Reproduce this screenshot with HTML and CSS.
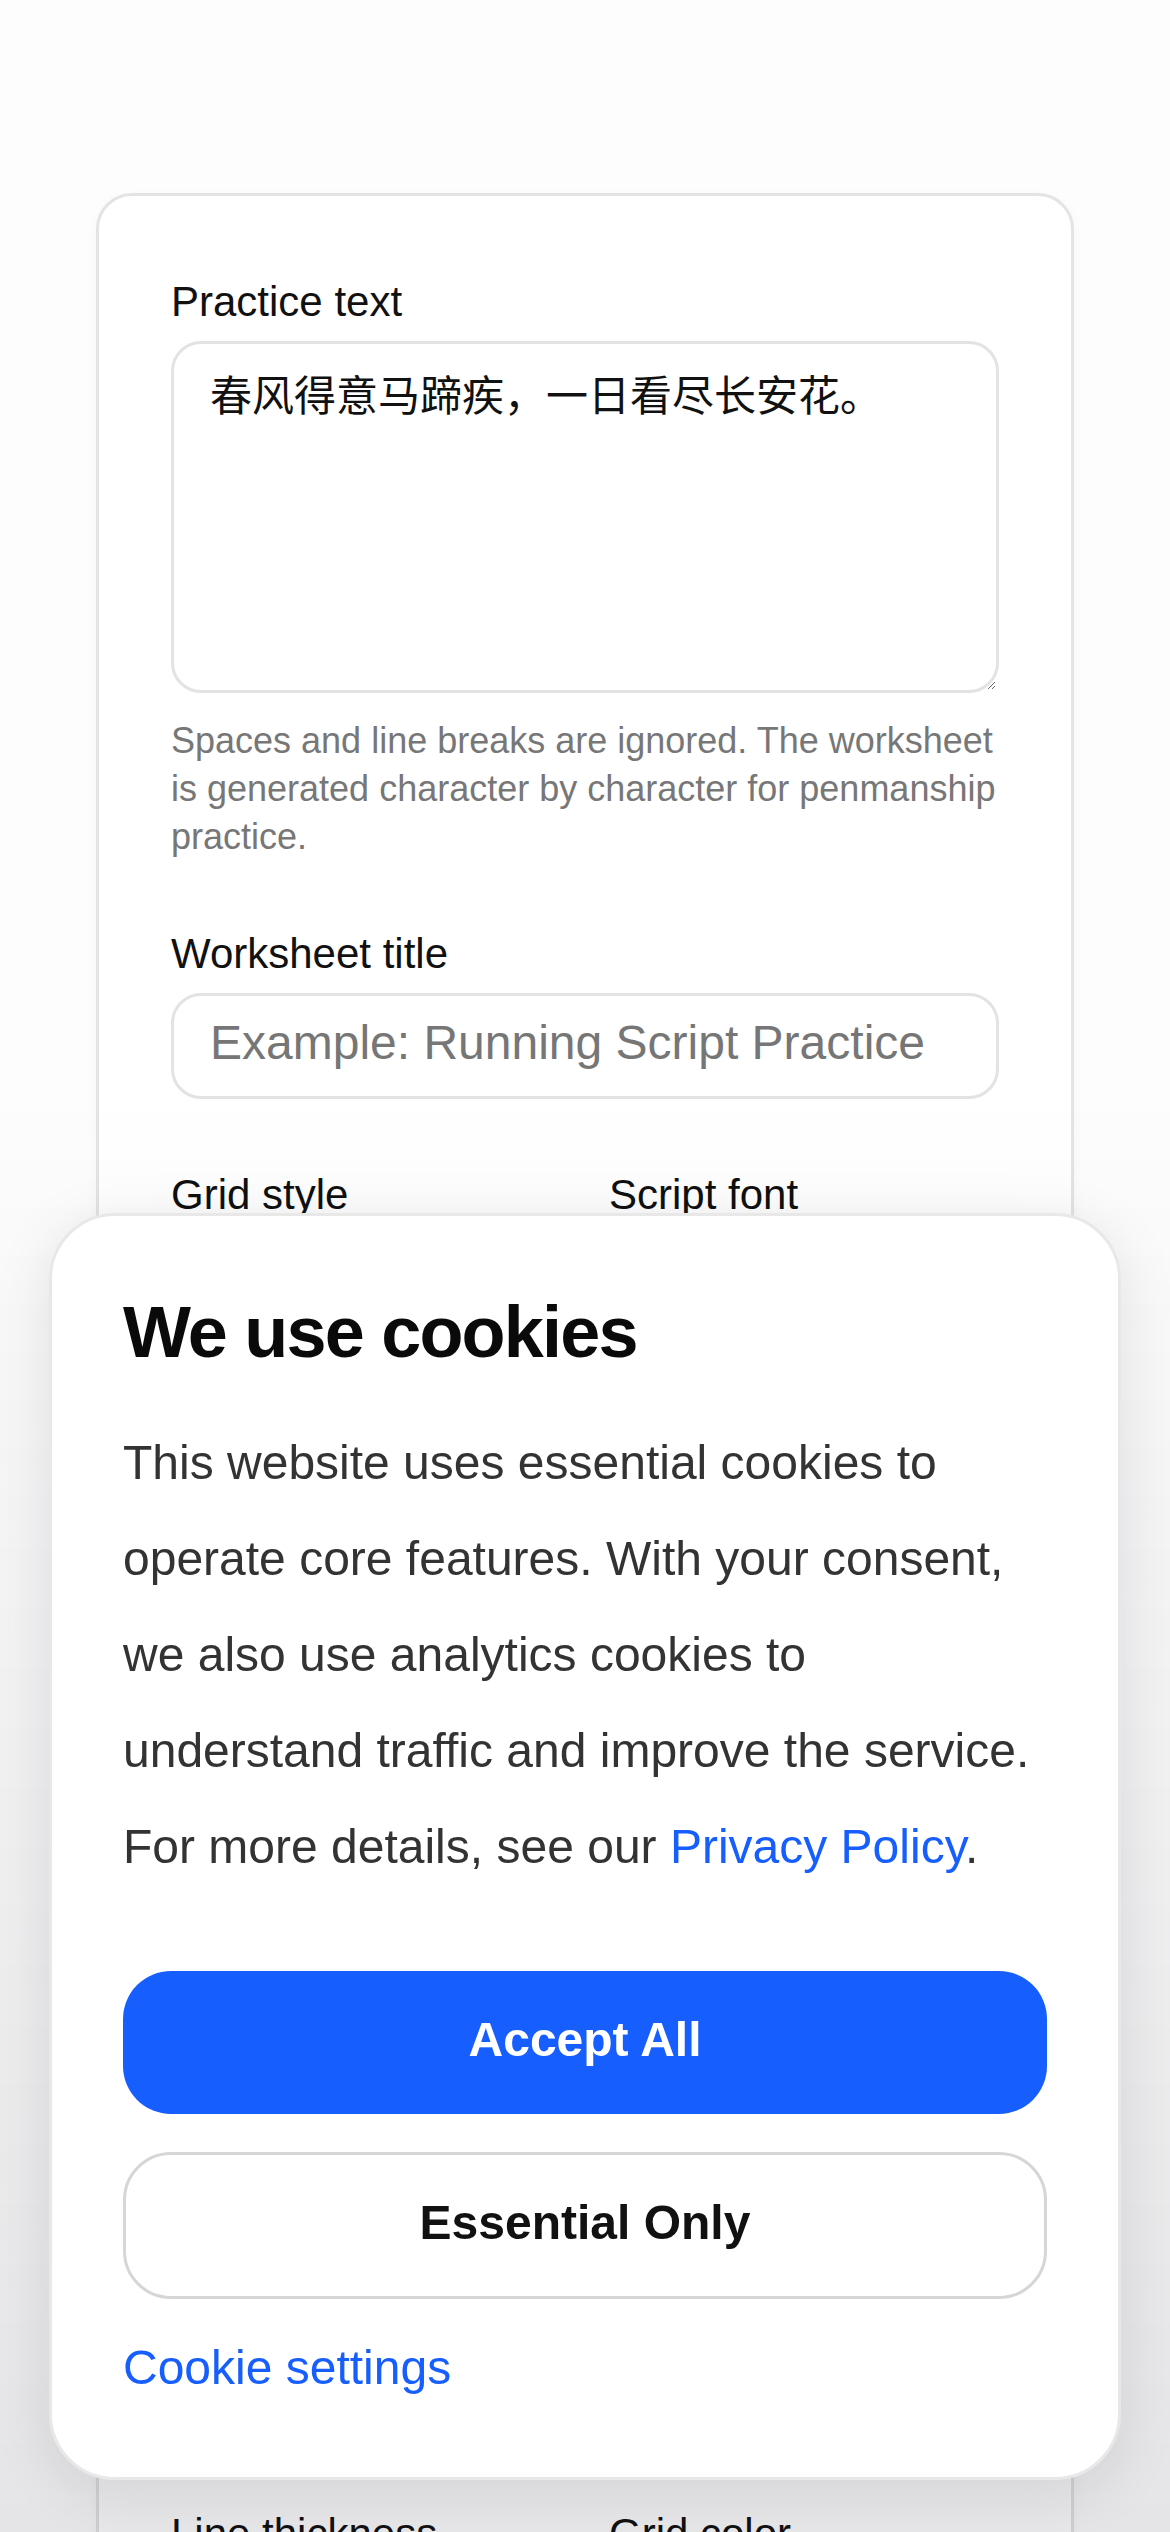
FILE: index.html
```html
<!DOCTYPE html>
<html lang="en">
<head>
<meta charset="utf-8">
<title>Penmanship Worksheet</title>
<link rel="stylesheet" href="styles.css">
</head>
<body>
<main class="page">
  <section class="card">
    <div class="field">
      <label class="label" for="practice">Practice text</label>
      <textarea class="textarea" id="practice">春风得意马蹄疾，一日看尽长安花。</textarea>
      <p class="hint">Spaces and line breaks are ignored. The worksheet is generated character by character for penmanship practice.</p>
    </div>
    <div class="field">
      <label class="label" for="title">Worksheet title</label>
      <input class="input input-text" id="title" type="text" placeholder="Example: Running Script Practice">
    </div>
    <div class="row row-first">
      <div class="field">
        <label class="label" for="grid">Grid style</label>
        <select class="input" id="grid" aria-label="Grid style"><option value="rice"></option></select>
      </div>
      <div class="field">
        <label class="label" for="font">Script font</label>
        <select class="input" id="font" aria-label="Script font"><option value="kai"></option></select>
      </div>
    </div>
    <div class="settings-block" aria-hidden="true"></div>
    <div class="row">
      <div class="field">
        <label class="label" for="thick">Line thickness</label>
        <select class="input" id="thick" aria-label="Line thickness"><option value="thin"></option></select>
      </div>
      <div class="field">
        <label class="label" for="color">Grid color</label>
        <select class="input" id="color" aria-label="Grid color"><option value="red"></option></select>
      </div>
    </div>
  </section>
</main>

<div class="backdrop"></div>

<aside class="cookie" role="dialog" aria-label="Cookie consent">
  <h2 class="cookie-title">We use cookies</h2>
  <p class="cookie-text">This website uses essential cookies to operate core features. With your consent, we also use analytics cookies to understand traffic and improve the service. For more details, see our <a class="link" href="#">Privacy Policy</a>.</p>
  <button class="btn btn-primary" type="button">Accept All</button>
  <button class="btn btn-outline" type="button">Essential Only</button>
  <a class="cookie-settings" href="#">Cookie settings</a>
</aside>
</body>
</html>
```

FILE: styles.css
```css
* {
  box-sizing: border-box;
}

html, body {
  margin: 0;
  padding: 0;
}

body {
  background: #fdfdfd;
  font-family: "Liberation Sans", Arial, "Noto Sans CJK SC", sans-serif;
  color: #111;
  overflow: hidden;
  height: 2532px;
}

.page {
  padding-top: 193px;
}

.card {
  margin: 0 96px;
  background: #fff;
  border: 3px solid #e4e4e4;
  border-radius: 36px;
  padding: 74px 72px 72px;
  box-shadow: 0 3px 12px rgba(0, 0, 0, 0.03);
  display: flex;
  flex-direction: column;
  gap: 61px;
}

.field {
  display: flex;
  flex-direction: column;
  min-width: 0;
}

.label {
  display: block;
  font-size: 42px;
  line-height: 63px;
  margin-bottom: 8px;
  color: #111;
}

.textarea {
  display: block;
  width: 100%;
  height: 352px;
  border: 3px solid #e3e3e3;
  border-radius: 30px;
  padding: 21px 36px;
  font-family: "Liberation Sans", "Noto Sans CJK SC", sans-serif;
  font-size: 42px;
  line-height: 63px;
  color: #111;
  background: #fff;
  resize: vertical;
  outline: none;
}

.hint {
  margin: 24px 0 0;
  font-size: 36px;
  line-height: 48px;
  color: #777;
}

.input {
  display: block;
  width: 100%;
  height: 106px;
  border: 3px solid #e3e3e3;
  border-radius: 30px;
  padding: 0 36px;
  font-family: "Liberation Sans", Arial, sans-serif;
  font-size: 48px;
  color: #111;
  background: #fff;
  outline: none;
  appearance: none;
}

.input-text {
  padding-bottom: 8px;
}

.input::placeholder {
  color: #767676;
}

.row {
  display: grid;
  grid-template-columns: 1fr 1fr;
  gap: 48px;
}

.row-first {
  margin-top: 3px;
}

.settings-block {
  height: 1040px;
}

.backdrop {
  position: fixed;
  inset: 0;
  pointer-events: none;
  background: linear-gradient(to bottom,
    rgba(20, 20, 40, 0) 0%,
    rgba(20, 20, 40, 0) 43%,
    rgba(20, 20, 40, 0.035) 60%,
    rgba(20, 20, 40, 0.1) 100%);
}

.cookie {
  position: fixed;
  left: 49px;
  right: 49px;
  bottom: 52px;
  background: #fff;
  border: 3px solid #e8e8e8;
  border-radius: 66px;
  padding: 70px 71px 73px;
  box-shadow: 0 12px 60px rgba(20, 20, 40, 0.1);
}

.cookie-title {
  margin: 0;
  font-size: 72px;
  line-height: 1.3;
  font-weight: 700;
  letter-spacing: -1.8px;
  color: #0a0a0a;
}

.cookie-text {
  margin: 35px 0 76px;
  font-size: 48px;
  line-height: 96px;
  color: #333;
}

.link {
  color: #175eff;
  text-decoration: none;
}

.btn {
  display: block;
  width: 100%;
  border-radius: 48px;
  font-family: "Liberation Sans", Arial, sans-serif;
  font-size: 48px;
  font-weight: 700;
  cursor: pointer;
  padding: 0 0 7px;
}

.btn-primary {
  height: 143px;
  border: none;
  background: #175eff;
  color: #fff;
}

.btn-outline {
  margin-top: 38px;
  height: 147px;
  border: 3px solid #d6d6d6;
  background: #fff;
  color: #111;
}

.cookie-settings {
  display: block;
  margin-top: 33px;
  font-size: 48px;
  line-height: 72px;
  color: #175eff;
  text-decoration: none;
}
```
